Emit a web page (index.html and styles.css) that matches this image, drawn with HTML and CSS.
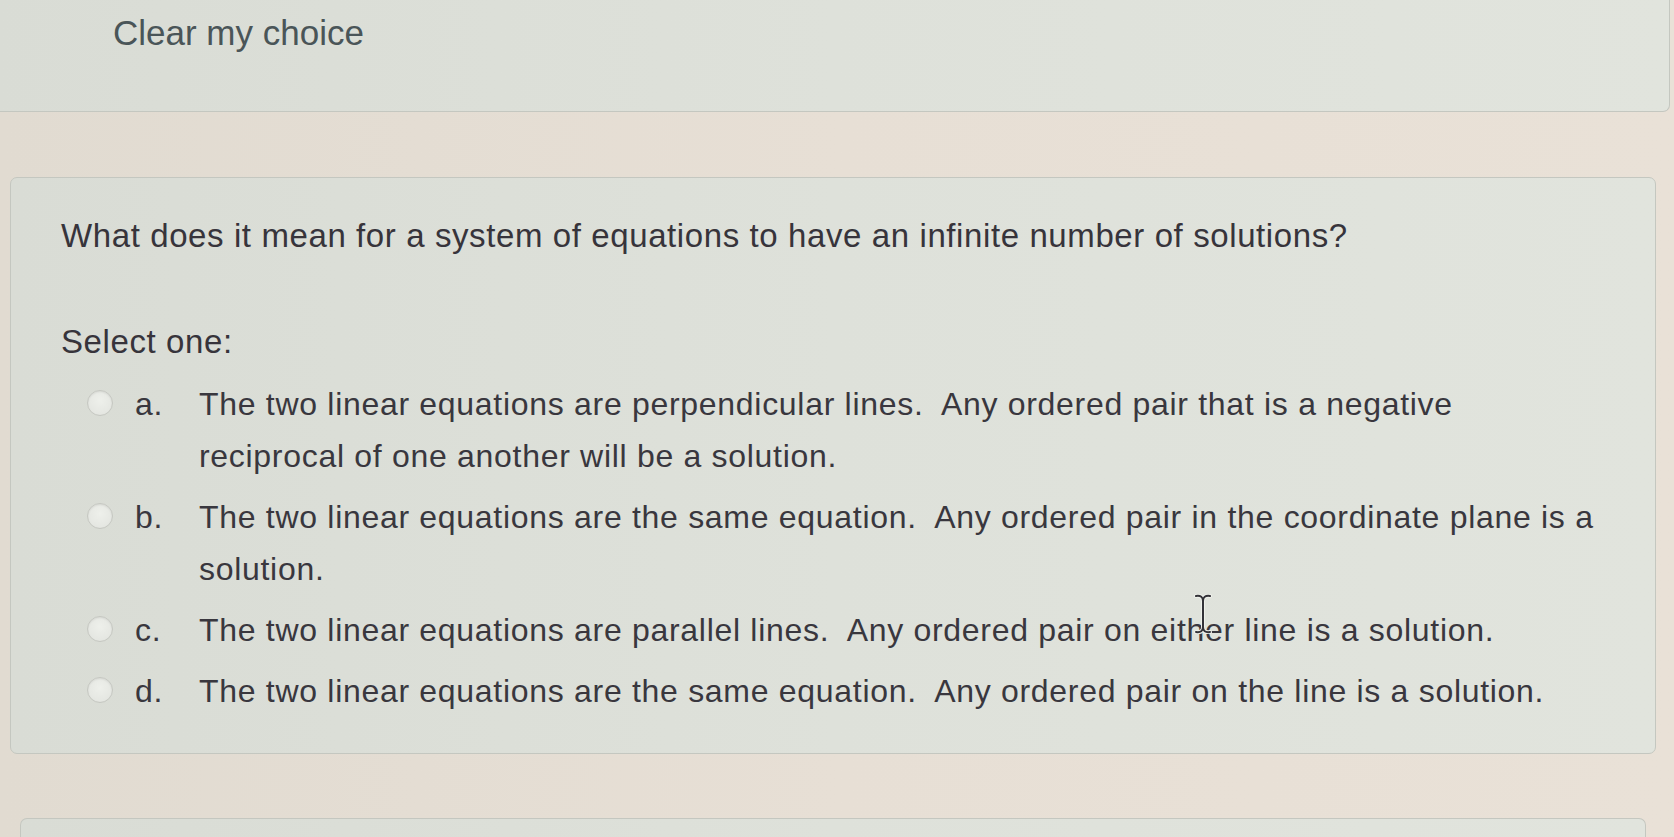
FILE: index.html
```html
<!DOCTYPE html>
<html lang="en">
<head>
<meta charset="utf-8">
<title>Question</title>
<link rel="stylesheet" href="styles.css">
</head>
<body>
<div class="page">
  <div class="card card-top">
    <a class="clear-choice">Clear my choice</a>
  </div>

  <div class="card card-question">
    <div class="qtext">What does it mean for a system of equations to have an infinite number of solutions?</div>
    <div class="prompt">Select one:</div>
    <div class="answers">
      <div class="opt">
        <span class="radio"></span>
        <span class="letter">a.</span>
        <span class="text">The two linear equations are perpendicular lines.&nbsp; Any ordered pair that is a negative<br>reciprocal of one another will be a solution.</span>
      </div>
      <div class="opt">
        <span class="radio"></span>
        <span class="letter">b.</span>
        <span class="text">The two linear equations are the same equation.&nbsp; Any ordered pair in the coordinate plane is a<br>solution.</span>
      </div>
      <div class="opt">
        <span class="radio"></span>
        <span class="letter">c.</span>
        <span class="text">The two linear equations are parallel lines.&nbsp; Any ordered pair on either line is a solution.</span>
      </div>
      <div class="opt">
        <span class="radio"></span>
        <span class="letter">d.</span>
        <span class="text">The two linear equations are the same equation.&nbsp; Any ordered pair on the line is a solution.</span>
      </div>
    </div>
  </div>

  <div class="card card-next"></div>

  <svg class="ibeam" width="18" height="40" viewBox="0 0 18 40">
    <path d="M2 2 Q9 1 9 7 Q9 1 16 2 M9 7 V33 M2 38 Q9 39 9 33 Q9 39 16 38" fill="none" stroke="#eef0ea" stroke-width="4" stroke-linecap="round"/>
    <path d="M2 2 Q9 1 9 7 Q9 1 16 2 M9 7 V33 M2 38 Q9 39 9 33 Q9 39 16 38" fill="none" stroke="#333238" stroke-width="2" stroke-linecap="round"/>
  </svg>
</div>
</body>
</html>
```

FILE: styles.css
```css
html, body {
  margin: 0;
  padding: 0;
}

body {
  width: 1674px;
  height: 837px;
  overflow: hidden;
  background: linear-gradient(90deg, #e1dbd1 0%, #e7dfd5 50%, #e9e1d7 100%);
  font-family: "Liberation Sans", Arial, Helvetica, sans-serif;
}

.page {
  position: relative;
  display: flex;
  flex-direction: column;
}

.card {
  border: 1px solid #c4c7c0;
  border-radius: 7px;
  background: linear-gradient(90deg, #d9dcd5 0%, #dee1da 50%, #e1e4dd 100%);
}

.card-top {
  margin: -10px 4px 0 -6px;
  height: 122px;
  box-sizing: border-box;
  padding: 23px 0 0 118px;
  border-top: none;
  border-radius: 0 0 7px 7px;
}

.clear-choice {
  display: block;
  font-size: 35px;
  line-height: 40px;
  color: #4a5558;
  text-decoration: none;
}

.card-question {
  margin: 65px 18px 0 10px;
  height: 577px;
  box-sizing: border-box;
  padding: 38px 20px 0 50px;
  color: #37343b;
}

.qtext {
  font-size: 33px;
  line-height: 40px;
  letter-spacing: 0.6px;
}

.prompt {
  margin-top: 66px;
  font-size: 33px;
  line-height: 40px;
  letter-spacing: 0.6px;
}

.answers {
  margin-top: 16px;
  padding-left: 26px;
  display: flex;
  flex-direction: column;
  gap: 9px;
}

.opt {
  display: flex;
  align-items: flex-start;
  font-size: 32px;
  line-height: 52px;
  letter-spacing: 0.7px;
  color: #39373e;
}

.radio {
  flex: none;
  width: 26px;
  height: 26px;
  margin-top: 12px;
  box-sizing: border-box;
  border-radius: 50%;
  border: 1.5px solid #c6c8c2;
  background: radial-gradient(circle at 50% 40%, #eef0eb 0%, #e5e7e2 70%, #d9dbd5 100%);
  box-shadow: inset 0 1px 2px rgba(0, 0, 0, 0.08);
}

.letter {
  flex: none;
  width: 64px;
  margin-left: 22px;
}

.text {
  flex: 1;
  white-space: nowrap;
}

.card-next {
  margin: 64px 28px 0 20px;
  height: 18px;
  border-bottom: none;
  border-radius: 7px 7px 0 0;
}

.ibeam {
  position: absolute;
  left: 1194px;
  top: 594px;
}
```
